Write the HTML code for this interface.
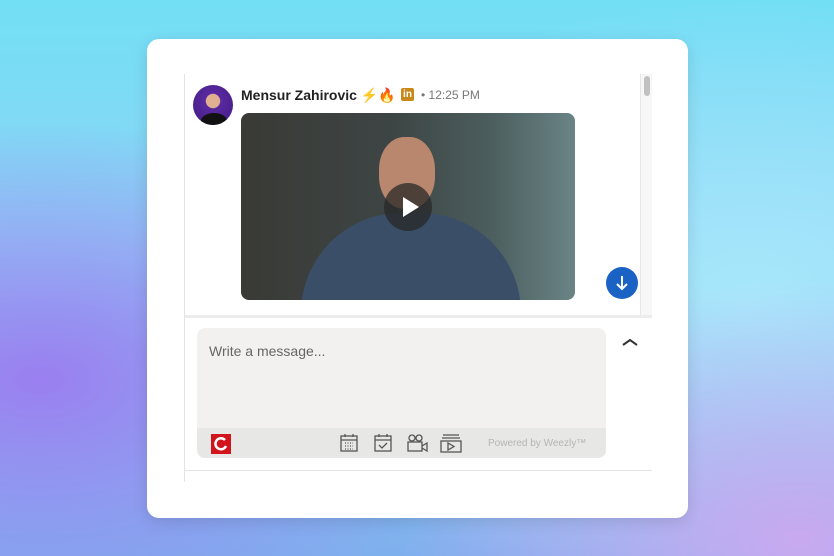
<!DOCTYPE html>
<html><head><style>
*{margin:0;padding:0;box-sizing:border-box}
body{width:834px;height:556px;overflow:hidden;font-family:"Liberation Sans",sans-serif;position:relative;
background:radial-gradient(ellipse 450px 260px at 40px 380px,#9a7ff0 0%,rgba(154,127,240,0) 100%),
radial-gradient(ellipse 400px 260px at 800px 540px,#c9a9f0 0%,rgba(201,169,240,0) 100%),
radial-gradient(ellipse 500px 300px at 750px 300px,#a8e8fb 0%,rgba(168,232,251,0) 100%),
linear-gradient(180deg,#72dff5 0%,#8fd4f6 45%,#7fb0ee 100%);}
.card{position:absolute;left:147px;top:39px;width:541px;height:479px;background:#fff;border-radius:12px;box-shadow:0 4px 16px rgba(0,0,0,.12)}
.vl{position:absolute;left:184px;top:74px;width:1px;height:408px;background:#e3e3e3}
.sb{position:absolute;left:640px;top:74px;width:12px;height:242px;background:#f7f7f7;border-left:1px solid #e6e6e6}
.sb i{position:absolute;left:3px;top:2px;width:6px;height:20px;border-radius:3px;background:#c1c1c1}
.div{position:absolute;left:185px;top:315px;width:467px;height:3px;background:#ececec}
.bl{position:absolute;left:185px;top:470px;width:467px;height:1px;background:#e3e3e3}
.av{position:absolute;left:193px;top:85px;width:40px;height:40px;border-radius:50%;background:radial-gradient(circle at 50% 40%,#e0b090 0 22%,#5a2aa0 24%,#3d1a80 100%);overflow:hidden}
.av:after{content:"";position:absolute;left:8px;top:28px;width:26px;height:16px;background:#111;border-radius:50% 50% 0 0}
.name{position:absolute;left:241px;top:87px;font-size:14px;font-weight:bold;color:#222;white-space:nowrap}
.time{position:absolute;left:421px;top:88px;font-size:12px;color:#777}
.li{position:absolute;left:401px;top:88px;width:13px;height:13px;background:#c8891a;border-radius:2px;color:#fff;font-size:10px;font-weight:bold;line-height:13px;text-align:center}
.vid{position:absolute;left:241px;top:113px;width:334px;height:187px;border-radius:8px;overflow:hidden;
background:linear-gradient(90deg,#3a3a36 0%,#3d4544 45%,#4c5e5e 75%,#6a8486 100%)}
.head{position:absolute;left:138px;top:24px;width:56px;height:72px;border-radius:45%;background:#b9876d}
.body{position:absolute;left:60px;top:100px;width:220px;height:110px;border-radius:100px 100px 0 0;background:#3a4e68}
.play{position:absolute;left:143px;top:70px;width:48px;height:48px;border-radius:50%;background:rgba(40,40,40,.75)}
.play:after{content:"";position:absolute;left:19px;top:14px;border-left:16px solid #fff;border-top:10px solid transparent;border-bottom:10px solid transparent}
.dn{position:absolute;left:606px;top:267px;width:32px;height:32px;border-radius:50%;background:#1a63c4}
.inp{position:absolute;left:197px;top:328px;width:409px;height:130px;border-radius:8px;background:#f2f1ef;overflow:hidden}
.ph{position:absolute;left:12px;top:15px;font-size:14px;color:#666}
.ft{position:absolute;left:0;top:100px;width:409px;height:30px;background:#e7e7e6}
.pw{position:absolute;left:291px;top:10px;font-size:10px;color:#b5b5b5}
.lg{position:absolute;left:14px;top:6px;width:20px;height:20px;background:#d2141c}
</style></head><body>
<div class="card"></div>
<div class="vl"></div>
<div class="sb"><i></i></div>
<div class="av"></div>
<div class="name">Mensur Zahirovic <span style="color:#f0b840;font-weight:normal">⚡</span><span style="color:#f07020">🔥</span></div>
<div class="li">in</div>
<div class="time">• 12:25 PM</div>
<div class="vid"><div class="body"></div><div class="head"></div><div class="play"></div></div>
<div class="dn"><svg width="32" height="32"><path d="M16 9v13M11 17l5 5 5-5" stroke="#fff" stroke-width="2" fill="none"/></svg></div>
<div class="div"></div>
<svg style="position:absolute;left:621px;top:337px" width="18" height="10"><path d="M2 8l7-5 7 5" stroke="#333" stroke-width="2" fill="none"/></svg>
<div class="inp"><div class="ph">Write a message...</div>
<div class="ft"><div class="lg"><svg width="20" height="20"><path d="M14 6A5.5 5.5 0 1 0 15 12" stroke="#fff" stroke-width="2.5" fill="none"/></svg></div>
<svg style="position:absolute;left:143px;top:5px" width="130" height="20" fill="none" stroke="#555" stroke-width="1.3">
<rect x="1" y="3" width="16" height="15"/><path d="M1 7h16M5 1v3M13 1v3"/><path d="M5 10h8M5 13h8M5 16h8" stroke-dasharray="1 1.5"/>
<rect x="35" y="3" width="16" height="15"/><path d="M35 7h16M39 1v3M47 1v3M39 12l3 3 5-5"/>
<circle cx="72" cy="5" r="3"/><circle cx="79" cy="5" r="3"/><rect x="68" y="9" width="14" height="9"/><path d="M82 13l5-3v8l-5-3"/>
<path d="M103 2h16M102 5h18"/><rect x="101" y="8" width="20" height="11"/><path d="M108 10v7l6-3.5z"/>
</svg>
<div class="pw">Powered by Weezly™</div></div></div>
<div class="bl"></div>
</body></html>
